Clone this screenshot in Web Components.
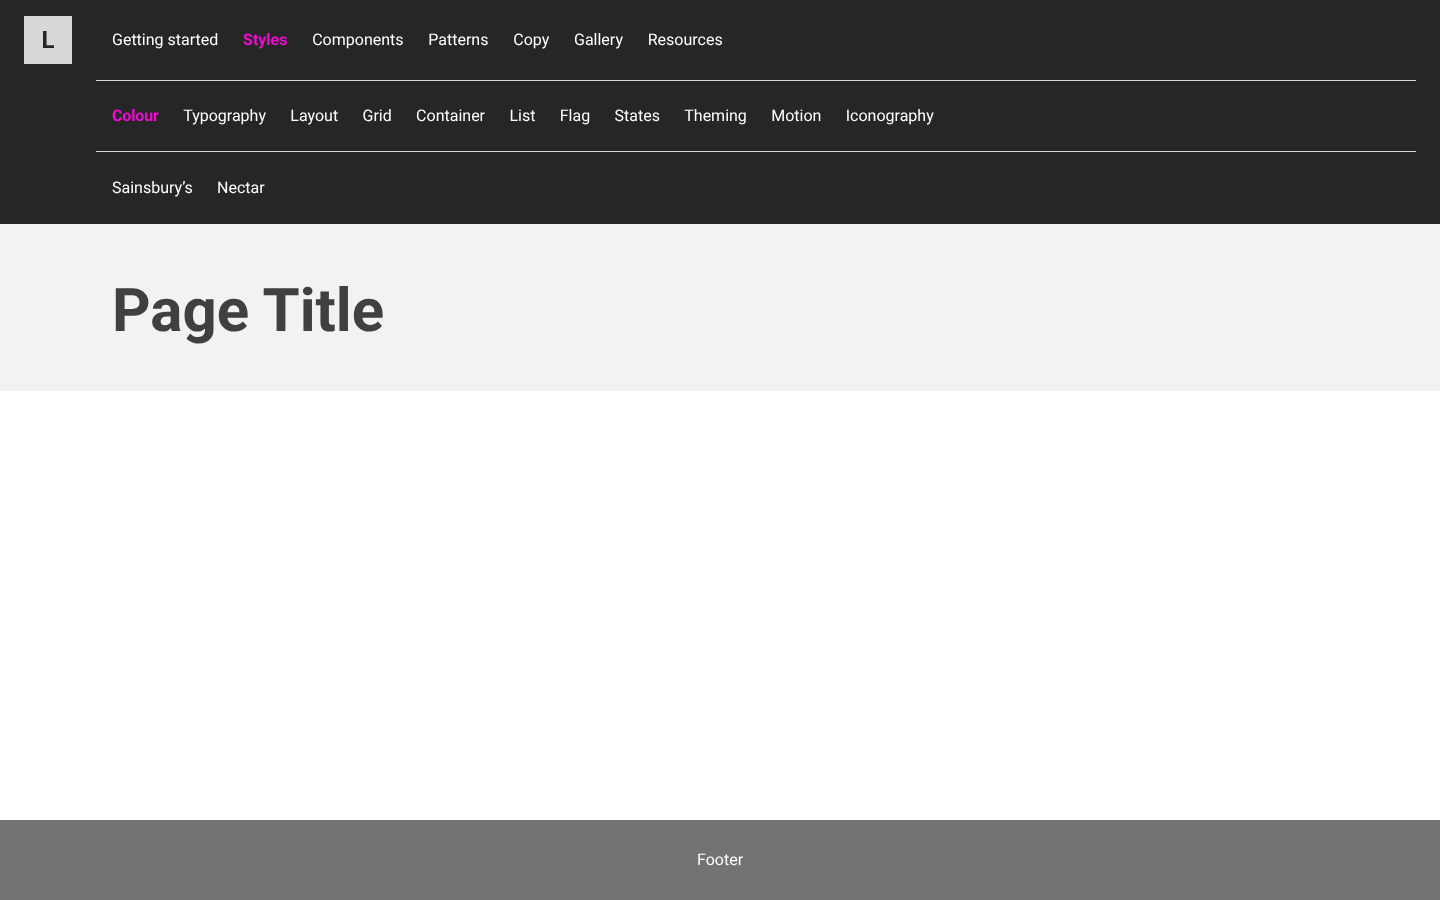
<!DOCTYPE html>
<html lang="en"><head><meta charset="utf-8"><title>Page</title>
<style>
html,body{margin:0;padding:0;height:100%}
body{font-family:Roboto,"Liberation Sans",sans-serif;font-size:16px;line-height:24px;text-rendering:geometricPrecision}
</style></head><body>
<app-shell>
  <site-header>
    <nav-row active="Styles" items="Getting started|Styles|Components|Patterns|Copy|Gallery|Resources" first></nav-row>
    <nav-row active="Colour" items="Colour|Typography|Layout|Grid|Container|List|Flag|States|Theming|Motion|Iconography"></nav-row>
    <nav-row items="Sainsbury’s|Nectar" last></nav-row>
  </site-header>
  <page-hero>Page Title</page-hero>
  <page-main></page-main>
  <site-footer>Footer</site-footer>
</app-shell>
<script>
function def(name,html,init){customElements.define(name,class extends HTMLElement{constructor(){super();this.attachShadow({mode:'open'}).innerHTML=html}connectedCallback(){init&&init(this)}})}
def('app-shell','<style>:host{display:flex;flex-direction:column;min-height:900px}</style><slot></slot>');
def('site-header',`<style>:host{display:flex;background:#262626;padding:0 24px 0 24px;height:224px;box-sizing:border-box}
.logo{flex:none;width:48px;height:48px;margin:16px 24px 0 0;background:#d8d8d8;color:#262626;display:flex;align-items:center;justify-content:center;font-weight:700;font-size:24px;will-change:transform}
.rows{flex:1;display:flex;flex-direction:column;min-width:0}</style><div class="logo">L</div><div class="rows"><slot></slot></div>`);
def('nav-row',`<style>:host{display:block}
ul{list-style:none;margin:0;padding:0 16px;display:flex;gap:24.35px;align-items:center;height:71px;box-sizing:border-box;border-top:1px solid #d8d8d8;will-change:transform}
:host([first]) ul{border-top:0;height:80px;gap:24.75px}
:host([last]) ul{height:73px;gap:24.2px}
li{color:#fff;white-space:nowrap}
li.on{color:#f00ad2;font-weight:700;letter-spacing:-.13px}
:host([first]) li.on{letter-spacing:0}</style><ul></ul>`,el=>{
  const ul=el.shadowRoot.querySelector('ul');ul.innerHTML='';
  el.getAttribute('items').split('|').forEach(t=>{const li=document.createElement('li');li.textContent=t;if(t===el.getAttribute('active'))li.className='on';ul.append(li)});
});
def('page-hero',`<style>:host{display:block;background:#f2f2f2;color:#404040;padding:47px 112px 41px;height:167px;box-sizing:border-box;font-weight:700;font-size:60px;line-height:79px}
span{display:inline-block;will-change:transform}</style><span><slot></slot></span>`);
def('page-main','<style>:host{display:block;flex:1;background:#fff}</style>');
def('site-footer',`<style>:host{display:flex;align-items:center;justify-content:center;height:80px;background:#737373;color:#fff}
span{will-change:transform}</style><span><slot></slot></span>`);
</script>
</body></html>
